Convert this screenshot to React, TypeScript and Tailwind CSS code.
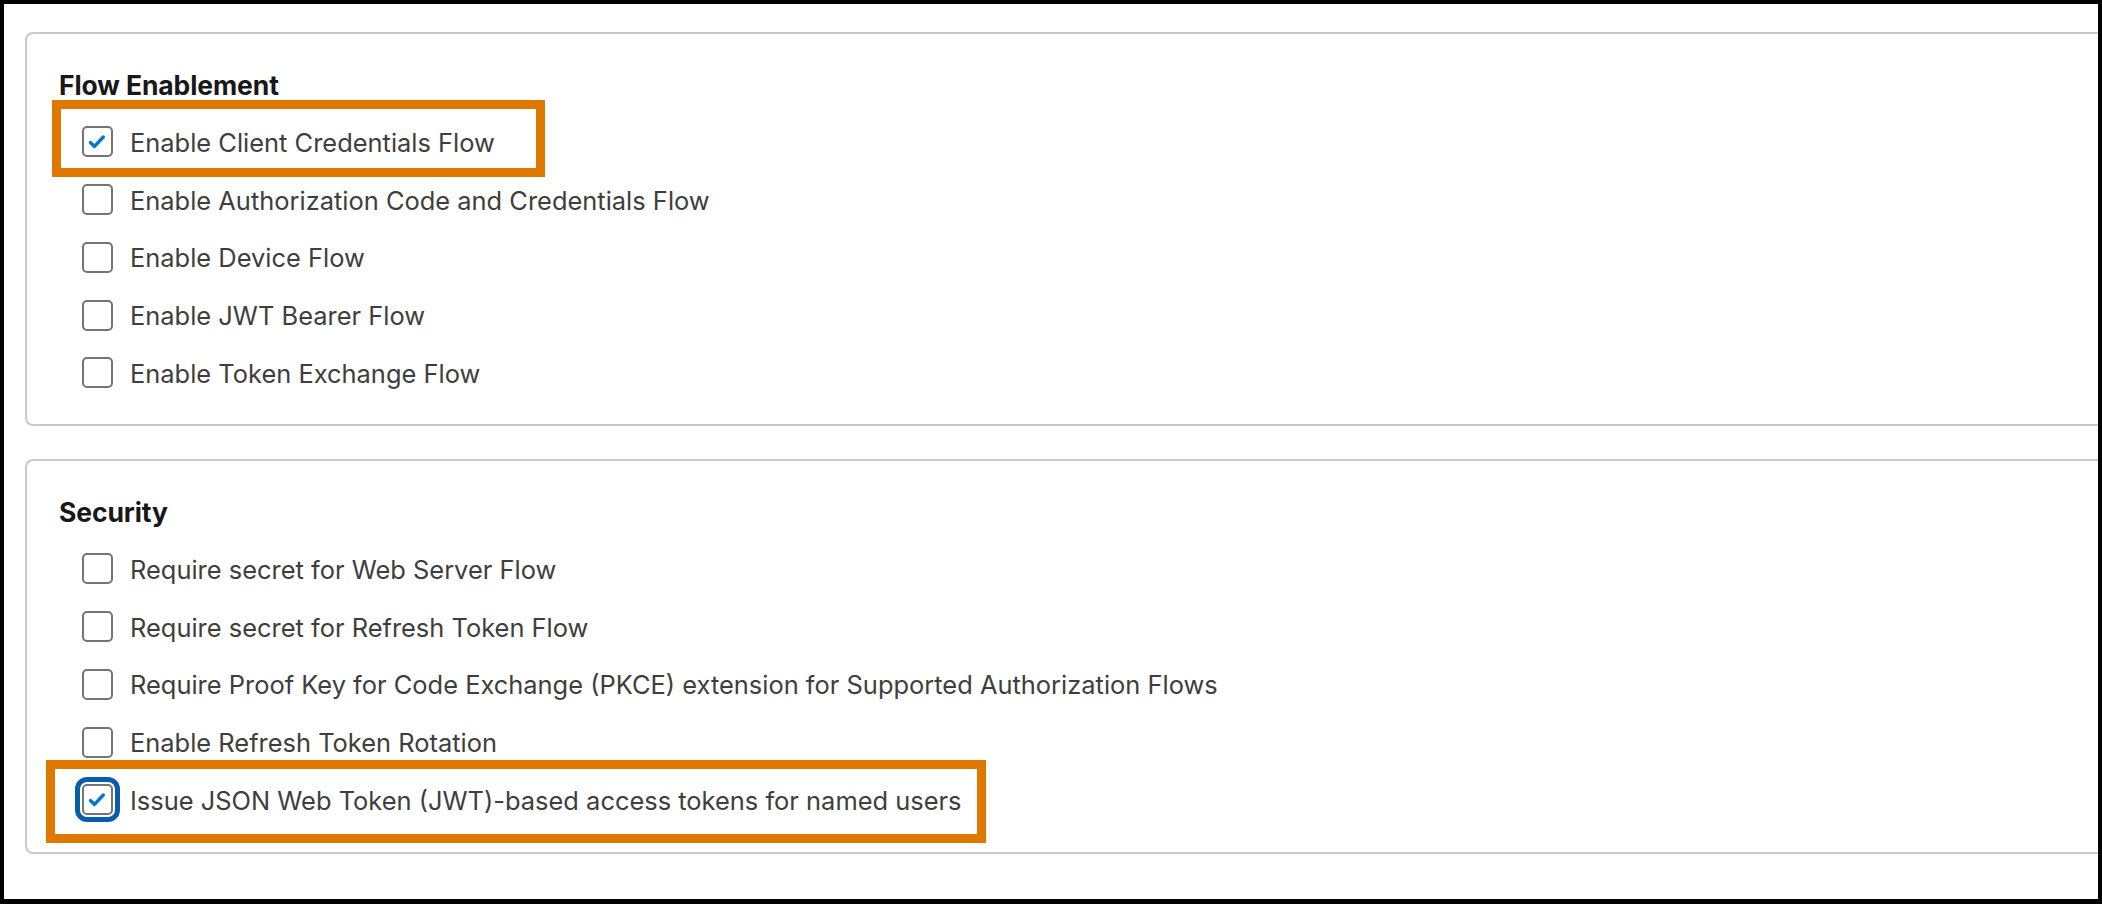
import React from 'react';

type Option = {
  label: string;
  checked?: boolean;
  focused?: boolean;
};

const flowOptions: Option[] = [
  { label: 'Enable Client Credentials Flow', checked: true },
  { label: 'Enable Authorization Code and Credentials Flow' },
  { label: 'Enable Device Flow' },
  { label: 'Enable JWT Bearer Flow' },
  { label: 'Enable Token Exchange Flow' },
];

const securityOptions: Option[] = [
  { label: 'Require secret for Web Server Flow' },
  { label: 'Require secret for Refresh Token Flow' },
  { label: 'Require Proof Key for Code Exchange (PKCE) extension for Supported Authorization Flows' },
  { label: 'Enable Refresh Token Rotation' },
  { label: 'Issue JSON Web Token (JWT)-based access tokens for named users', checked: true, focused: true },
];

const Checkbox = ({ checked, focused }: { checked?: boolean; focused?: boolean }) => (
  <span
    className={`flex h-[31px] w-[31px] shrink-0 items-center justify-center rounded-[5px] border-2 border-[#747474] bg-white ${
      focused ? 'outline-[5px] outline-offset-[2px] outline-[#0b5cab] outline-solid' : ''
    }`}
  >
    {checked && (
      <svg width="27" height="27" viewBox="0 0 27 27" fill="none">
        <path
          d="M6.5 14.6 L10.5 18.4 L19.3 9"
          stroke="#0176d3"
          strokeWidth="3.4"
          strokeLinecap="round"
          strokeLinejoin="round"
        />
      </svg>
    )}
  </span>
);

const Section = ({ title, options, className }: { title: string; options: Option[]; className: string }) => (
  <section
    className={`rounded-l-[8px] border-y-2 border-l-2 border-[#c9c9c9] bg-white pl-[32px] pt-[35px] ${className}`}
  >
    <h2 className="text-[26.5px] leading-[32px] font-bold tracking-[-0.1px] text-[#181818]">{title}</h2>
    <ul className="mt-[12px] ml-[23px]">
      {options.map((option) => (
        <li key={option.label} className="flex h-[57.75px] items-center gap-[17px]">
          <Checkbox checked={option.checked} focused={option.focused} />
          <span className="pt-[2px] text-[25.45px] leading-[32px] text-[#3e3e3c]">{option.label}</span>
        </li>
      ))}
    </ul>
  </section>
);

export default function App() {
  return (
    <div className="flex h-[904px] w-[2102px] bg-black pt-[4px] pr-[4px] pb-[5px] pl-[4px] font-['Inter','Noto_Sans',sans-serif]">
      <div className="relative flex-1 bg-white pt-[28px] pl-[21px]">
        <Section title="Flow Enablement" options={flowOptions} className="h-[394px]" />
        <Section title="Security" options={securityOptions} className="mt-[33px] h-[395px]" />

        {/* annotation boxes */}
        <div className="pointer-events-none absolute top-[96px] left-[48px] h-[77px] w-[493px] border-[9px] border-[#df7800]" />
        <div className="pointer-events-none absolute top-[756px] left-[42px] h-[83px] w-[940px] border-[9px] border-[#df7800]" />
      </div>
    </div>
  );
}
